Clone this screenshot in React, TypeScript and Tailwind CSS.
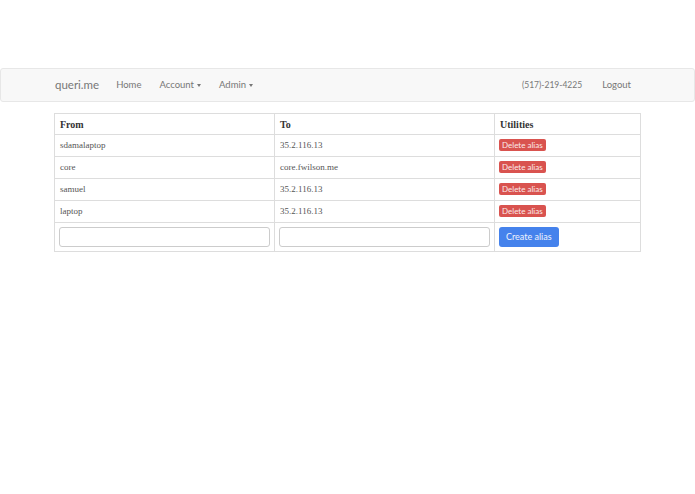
const aliases = [
  { from: "sdamalaptop", to: "35.2.116.13" },
  { from: "core", to: "core.fwilson.me" },
  { from: "samuel", to: "35.2.116.13" },
  { from: "laptop", to: "35.2.116.13" },
];

function Caret() {
  return <span className="ml-[3px] inline-block h-0 w-0 border-x-[2.5px] border-t-[3px] border-x-transparent border-t-[#777] align-middle" />;
}

export default function App() {
  return (
    <div className="min-h-[494px] bg-white pt-[68px] font-['Lato','Open_Sans',sans-serif]">
      {/* Navbar */}
      <nav className="flex h-[34px] items-center justify-between rounded-[3px] border border-[#e7e7e7] bg-[#f8f8f8] pl-[54px] pr-[63px] text-[9.5px] text-[#777]">
        <div className="flex items-center">
          <span className="text-[11.5px] text-[#777]">queri.me</span>
          <span className="ml-[17px]">Home</span>
          <span className="ml-[18px]">
            Account
            <Caret />
          </span>
          <span className="ml-[18px]">
            Admin
            <Caret />
          </span>
        </div>
        <div className="flex items-center">
          <span className="text-[8.5px]">(517)-219-4225</span>
          <span className="ml-[20px]">Logout</span>
        </div>
      </nav>

      {/* Alias table */}
      <div className="mx-[54px] mt-[11px]">
        <table className="w-full border-collapse border border-[#ddd] font-['Liberation_Serif',serif] text-[9px] text-[#555]">
          <thead>
            <tr className="h-[21px]">
              <th className="w-[220px] border border-[#ddd] px-[5px] text-left text-[10px] font-bold text-[#333]">From</th>
              <th className="w-[220px] border border-[#ddd] px-[5px] text-left text-[10px] font-bold text-[#333]">To</th>
              <th className="border border-[#ddd] px-[5px] text-left text-[10px] font-bold text-[#333]">Utilities</th>
            </tr>
          </thead>
          <tbody>
            {aliases.map((a) => (
              <tr key={a.from} className="h-[22px]">
                <td className="border border-[#ddd] px-[5px]">{a.from}</td>
                <td className="border border-[#ddd] px-[5px]">{a.to}</td>
                <td className="border border-[#ddd] px-[4px]">
                  <button className="rounded-[2px] bg-[#d9534f] px-[3px] py-[1px] font-['Lato',sans-serif] text-[8px] leading-[10px] text-[#fbeaea]">
                    Delete alias
                  </button>
                </td>
              </tr>
            ))}
            <tr className="h-[29px]">
              <td className="border border-[#ddd] px-[4px]">
                <input className="block h-[20px] w-full rounded-[3px] border border-[#ccc] bg-white" />
              </td>
              <td className="border border-[#ddd] px-[4px]">
                <input className="block h-[20px] w-full rounded-[3px] border border-[#ccc] bg-white" />
              </td>
              <td className="border border-[#ddd] px-[4px]">
                <button className="h-[20px] rounded-[3px] bg-[#4582ec] px-[7px] font-['Lato',sans-serif] text-[9px] text-[#eef3fd]">
                  Create alias
                </button>
              </td>
            </tr>
          </tbody>
        </table>
      </div>
    </div>
  );
}
